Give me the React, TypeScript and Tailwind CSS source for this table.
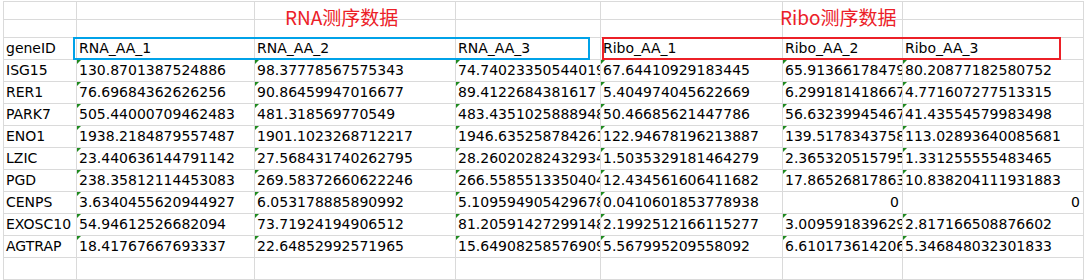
import React from "react";

const colW = ["w-[73px]", "w-[178px]", "w-[201px]", "w-[145px]", "w-[182px]", "w-[120px]", "w-[181px]"];

const header = ["geneID", "RNA_AA_1", "RNA_AA_2", "RNA_AA_3", "Ribo_AA_1", "Ribo_AA_2", "Ribo_AA_3"];

const rows: string[][] = [
  ["ISG15", "130.8701387524886", "98.37778567575343", "74.74023350544019", "67.64410929183445", "65.91366178479", "80.20877182580752"],
  ["RER1", "76.69684362626256", "90.86459947016677", "89.4122684381617", "5.404974045622669", "6.2991814186674", "4.771607277513315"],
  ["PARK7", "505.44000709462483", "481.318569770549", "483.43510258889481", "50.46685621447786", "56.632399454674", "41.43554579983498"],
  ["ENO1", "1938.2184879557487", "1901.1023268712217", "1946.6352587842617", "122.94678196213887", "139.5178343758", "113.02893640085681"],
  ["LZIC", "23.440636144791142", "27.568431740262795", "28.260202824329344", "1.5035329181464279", "2.365320515795", "1.331255555483465"],
  ["PGD", "238.35812114453083", "269.58372660622246", "266.5585513350404", "12.434561606411682", "17.86526817863", "10.838204111931883"],
  ["CENPS", "3.6340455620944927", "6.053178885890992", "5.109594905429678", "0.0410601853778938", "0", "0"],
  ["EXOSC10", "54.94612526682094", "73.71924194906512", "81.20591427299148", "2.1992512166115277", "3.009591839629", "2.817166508876602"],
  ["AGTRAP", "18.41767667693337", "22.64852992571965", "15.64908258576909", "5.567995209558092", "6.610173614206", "5.346848032301833"],
];

function Cell({ i, value, flag }: { i: number; value: string; flag?: boolean }) {
  const isNum = value === "0";
  return (
    <div
      className={`${colW[i]} relative shrink-0 h-full border-r border-[#dadada] px-[2px] flex items-center overflow-hidden whitespace-nowrap ${
        isNum ? "justify-end pr-[3px]" : ""
      }`}
    >
      {flag && !isNum && (
        <div className="absolute top-0 left-0 w-0 h-0 border-t-[4px] border-t-[#1e8a1e] border-r-[4px] border-r-transparent" />
      )}
      {value}
    </div>
  );
}

function Row({ cells, h, flags }: { cells: string[]; h: string; flags?: boolean }) {
  return (
    <div className={`flex ${h} border-b border-[#dadada] box-content`}>
      {cells.map((c, i) => (
        <Cell key={i} i={i} value={c} flag={flags && i > 0} />
      ))}
    </div>
  );
}

export default function App() {
  const empty = ["", "", "", "", "", "", ""];
  return (
    <div className="relative w-[1085px] h-[280px] bg-white overflow-hidden font-['DejaVu_Sans',sans-serif] text-[14px] text-black">
      <div className="ml-[3px] mt-[1px] border-t border-l border-[#dadada] w-max">
        <Row cells={empty} h="h-[17px]" />
        <Row cells={empty} h="h-[17px]" />
        <Row cells={header} h="h-[21px]" />
        {rows.map((r, i) => (
          <Row key={i} cells={r} h="h-[21px]" flags />
        ))}
        <Row cells={empty} h="h-[21px]" />
      </div>

      {/* shapes drawn over the sheet */}
      <div className="absolute left-[285px] top-[5px] text-[19px] leading-[24px] text-[#ec2027] font-['Noto_Sans_CJK_SC',sans-serif]">
        RNA测序数据
      </div>
      <div className="absolute left-[780px] top-[5px] text-[19px] leading-[24px] text-[#ec2027] font-['Noto_Sans_CJK_SC',sans-serif]">
        Ribo测序数据
      </div>
      <div className="absolute left-[73px] top-[37px] w-[517px] h-[23px] border-2 border-[#00a2e8]" />
      <div className="absolute left-[602px] top-[37px] w-[459px] h-[23px] border-2 border-[#ec2027]" />
    </div>
  );
}
